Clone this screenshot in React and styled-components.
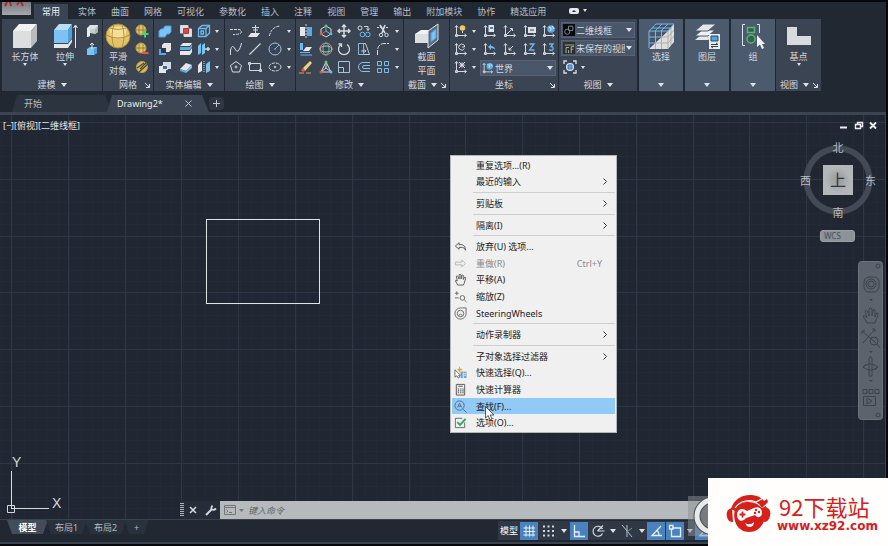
import React from 'react';
import styled, { createGlobalStyle } from 'styled-components';

const color = {
	bar: '#212832',
	panel: '#3b4453',
	light: '#4c5a6e',
	canvas: '#202732',
	text: '#d5d9de',
	active: '#4a82bd',
};

/* ---------- icons ---------- */

const Icon = ({ name, size = 14, box = 14 }) => (
	<svg width={size} height={size} viewBox={`0 0 ${box} ${box}`} fill="none" stroke="#d5d9de" strokeWidth="1" aria-hidden="true">
		{icons[name]}
	</svg>
);

const axes = <path d="M2.5 2v9.5H12M1 3.5L2.5 1.5L4 3.5M10.5 10L12.5 11.5L10.5 13M1.5 10.500h2v2h-2z" />;

const icons = {
	box: <g stroke="none"><path d="M1 8L7 1H25L19 8z" fill="#f1f2f2" /><path d="M1 8H19V25H1z" fill="#dcdedf" /><path d="M19 8L25 1V18L19 25z" fill="#b9bcbe" /></g>,
	extrude: <g stroke="none"><path d="M2 7L7 1H20L16 7z" fill="#b5def8" /><path d="M2 7H16V20H2z" fill="#7cc3f3" /><path d="M16 7L20 1V15L16 20z" fill="#4fa0dc" /><path d="M2 21H16L20 16V19L16 25H2z" fill="#e4e6e8" /><path d="M23.500 3V25M21.500 5L23.500 2L25.500 5" stroke="#e4e6e8" /></g>,
	poly: <g stroke="none"><path d="M2 4L5 1H13V8L10 10V5H5V12L2 13z" fill="#dfe1e4" /><path d="M10 5L13 2V8L10 10z" fill="#aeb3ba" /><path d="M2 4L5 5V12L2 13z" fill="#eceef0" /><path d="M5 5H10V10L5 9z" fill="#c9cdd2" /></g>,
	press: <g stroke="none"><path d="M2 7L5 5H12V11L9 13H2z" fill="#7cc3f3" /><path d="M9 7L12 5V11L9 13z" fill="#4fa0dc" /><path d="M7 7V1M5 3L7 1L9 3" stroke="#e4e6e8" /></g>,
	ball: <g><circle cx="13" cy="13" r="12" fill="#e2c468" stroke="#b18c32" /><path d="M4 5Q13 2 22 5L20 14Q13 17 6 14z" fill="#f4df98" stroke="none" /><path d="M1 12Q13 18 25 12M9 1.500Q5 13 9 24.500M17 1.500Q21 13 17 24.500M4 5Q13 8 22 5" stroke="#a98430" strokeWidth=".8" /></g>,
	ballAdd: <g><circle cx="6" cy="6" r="5" fill="#e2c468" stroke="#c3a048" /><path d="M1 6H11M4 1.500V10.500M8 1.500V10.500" stroke="#876b2a" strokeWidth=".7" /><path d="M10 6.500V13.500M6.500 10H13.500" stroke="#53cf72" strokeWidth="2" /></g>,
	ballSub: <g><circle cx="6" cy="6" r="5" fill="#e2c468" stroke="#c3a048" /><path d="M1 6H11M4 1.500V10.500M8 1.500V10.500" stroke="#876b2a" strokeWidth=".7" /><path d="M7 11H13.500" stroke="#e2574c" strokeWidth="2.200" /></g>,
	ballCut: <g><circle cx="7" cy="7" r="5.500" fill="#d6bb66" stroke="#c3a048" /><path d="M2 8L9 3M4 12L13 4M5 9L12 2" stroke="#4c4633" strokeWidth="1.200" /></g>,
	union: <path d="M1 7L3 5H5L7 2H13V8L11 10H9L7 13H1z" fill="#7cc3f3" stroke="#4fa0dc" />,
	intersect: <g><path d="M1.500 1.500H9V9H1.500z" fill="#dfe1e4" /><path d="M5 5H12.500V12.500H5z" fill="#dfe1e4" /><path d="M4.500 4.500H9.500V9.500H4.500z" fill="#d8474d" stroke="#b8353b" /></g>,
	cube: <path d="M1.500 4.500L5 1.500H12.500V9L9 12.500H1.500zM1.500 4.500H9V12.500M9 4.500L12.500 1.500M4 7H6.500V10H4z" stroke="#6db8ee" strokeWidth="1.300" />,
	subtract: <g stroke="none"><path d="M4 3L6 1H13V8L11 10H4z" fill="#e4e6e8" /><path d="M1 7H8V13H1z" fill="#5aa9e3" /><path d="M3 6H8V11H3z" fill="#2e3948" /></g>,
	stack: <g stroke="none"><path d="M1 4L4 1H13L11 4z" fill="#e4e6e8" /><path d="M1 5H11L13 2V5L11 8H1z" fill="#5aa9e3" /><path d="M1 9H11L13 6V10L11 13H1z" fill="#e4e6e8" /></g>,
	stack2: <g stroke="none"><path d="M1 9L7 3L13 5L7 11z" fill="#e4e6e8" /><path d="M1 9L7 11V13L1 11z" fill="#5aa9e3" /><path d="M7 11L13 5V8L7 13z" fill="#7cc3f3" /></g>,
	slice: <g stroke="none"><path d="M1 4L4 1V11L1 13z" fill="#7cc3f3" /><path d="M5 3L8 1V11L5 13z" fill="#7cc3f3" /><path d="M8 7H13M11 5V9" stroke="#d5d9de" strokeWidth="1.500" /></g>,
	interfere: <g stroke="none"><path d="M1 6H8V13H1z" fill="#e4e6e8" /><path d="M5 2H13V9H5z" fill="#d5d9de" /><path d="M4.500 5.500H9.500V9.500H4.500z" fill="#2d6fb0" stroke="#e4e6e8" /></g>,
	separate: <g stroke="none"><path d="M1 5L5 1V11L1 13z" fill="#e4e6e8" /><path d="M9 4L13 1V11L9 13z" fill="#7cc3f3" /><path d="M7 1V13" stroke="#d5d9de" strokeDasharray="1 1" /></g>,
	pline: <path d="M1 5.500H10Q13 6 12 9Q11 10.500 4 10.500" strokeDasharray="3 1" />,
	plane: <g><path d="M3 9H12L9 13H0z" fill="#e4e6e8" stroke="none" /><path d="M7.500 9V1M4 3.500H11M5 6H10" /></g>,
	arc: <path d="M1.500 12Q3 3 12 2" strokeDasharray="3 1" />,
	spline: <path d="M1.500 13V8Q3 2 5.500 6Q8 12 10.500 7Q12 4 12.500 1" />,
	line: <path d="M1.500 12.500L12.500 1.500" strokeWidth="1.200" />,
	circle: <g><circle cx="7" cy="7" r="6" stroke="#9ec6e6" /><path d="M7 7L11 3M6 7H8" stroke="#6db8ee" /></g>,
	pentagon: <g><path d="M7 1.500L12.500 5.500L10.500 12H3.500L1.500 5.500z" /><circle cx="7" cy="7" r="1" /></g>,
	rect: <path d="M1.500 3.500H12.500V10.500H1.500zM0.500 2.500h2v2h-2zM11.500 9.500h2v2h-2z" />,
	ellipse: <g><ellipse cx="7" cy="7" rx="6" ry="4" strokeDasharray="3 1" /><circle cx="7" cy="7" r=".8" /></g>,
	mirror: <g stroke="none"><path d="M1 3H6V12H1z" fill="#e4e6e8" /><path d="M8 3H13V12H8z" fill="#5aa9e3" /><path d="M7 0V14" stroke="#d5d9de" strokeDasharray="2 1" /></g>,
	gizmo: <g><path d="M7 2L12 5V10L7 13L2 10V5z" /><path d="M7 7V2" stroke="#53cf72" /><path d="M7 7L2.500 10" stroke="#e2574c" /><path d="M7 7L11.500 10" stroke="#6db8ee" /><circle cx="7" cy="1.800" r="1.300" fill="#53cf72" stroke="none" /><circle cx="2" cy="10" r="1.300" fill="#e2574c" stroke="none" /><circle cx="12" cy="10" r="1.300" fill="#6db8ee" stroke="none" /></g>,
	move: <path d="M7 1V13M1 7H13M5 3L7 1L9 3M5 11L7 13L9 11M3 5L1 7L3 9M11 5L13 7L11 9" strokeWidth="1.500" />,
	copy: <g><circle cx="3" cy="4" r="2" /><path d="M7 2.500H11V6M9.500 4.500L11 6.500L12.500 4.500" /><circle cx="5.500" cy="10.500" r="2.300" stroke="#6db8ee" /><circle cx="10.800" cy="10.500" r="2.300" stroke="#6db8ee" /></g>,
	trim: <g><path d="M1 3.500H13" strokeDasharray="2 1" /><path d="M4 1L9 9M9 1L6 9" strokeWidth="1.600" /><circle cx="5" cy="11" r="1.700" /><circle cx="10.500" cy="11" r="1.700" /></g>,
	align: <g><path d="M1 1H4V8H1z" fill="#6db8ee" stroke="none" /><path d="M4 9L7 5H13L10 9z" fill="#e4e6e8" stroke="none" /><path d="M1 10.500H11M1.500 13H13" stroke="#6db8ee" /></g>,
	rotate3d: <g><circle cx="7" cy="7" r="6" stroke="#e2787a" /><ellipse cx="7" cy="7" rx="3" ry="6" stroke="#57c98d" /><ellipse cx="7" cy="7" rx="6" ry="3" stroke="#b1c0ce" /></g>,
	rotate: <path d="M4 2.500A5.500 5.500 0 1 0 10 2.500M4.500 5V2H1.500" strokeWidth="1.300" />,
	stretch: <g><path d="M1.500 1.500H6.500V12.500H1.500z" stroke="#8fb7d6" /><path d="M6.500 1.500H8.500L12.500 12.500H6.500M4 9H9M7.500 7.500L9 9L7.500 10.500" stroke="#b3cde0" /></g>,
	fillet: <path d="M1.500 13V8Q2 2 8 1.500H13" strokeDasharray="5 1" />,
	erase: <g stroke="none"><path d="M4 8L11 1L13 3L6 11z" fill="#f2cf7a" /><path d="M2 10L4 8L6 11L4 12z" fill="#e2574c" /><path d="M0 13H13" stroke="#e8a33d" strokeDasharray="5 2" /></g>,
	scale3d: <g><path d="M7 2L12 12H2zM7 2V8L2 12M7 8L12 12" /><circle cx="7" cy="2" r="1.500" fill="#53cf72" stroke="none" /><circle cx="2" cy="12" r="1.500" fill="#e2574c" stroke="none" /><circle cx="12" cy="12" r="1.500" fill="#6db8ee" stroke="none" /></g>,
	scale: <path d="M1.500 1.500H12.500V12.500H1.500zM1.500 7.500H6.500V12.500" stroke="#a6c6de" />,
	offset: <path d="M13 2.500H6A4.500 4.500 0 0 0 6 11.500H13M13 5.500H7A1.500 1.500 0 0 0 7 8.500H13" stroke="#8fc0e6" />,
	array: <path d="M1.500 1.500h4v4h-4zM8.500 1.500h4v4h-4zM1.500 8.500h4v4h-4zM8.500 8.500h4v4h-4z" stroke="#7fbdec" />,
	section: <g stroke="none"><path d="M1 11L7 7H17L14 11z" fill="#f1f2f2" /><path d="M1 11H14V20H1z" fill="#dcdedf" /><path d="M14 8L24 1V17L14 25z" fill="#5a6b80" stroke="#dfe3e7" /><path d="M17 10L22 6V15L17 19z" fill="#7cc3f3" stroke="#4fa0dc" /></g>,
	ucsBulb: <g>{axes}<circle cx="8.500" cy="4" r="2.800" fill="#f1cb62" stroke="none" /><path d="M8.500 7V9" /></g>,
	ucsRot: <g>{axes}<path d="M10 3A3 3 0 1 0 10.500 6.500M8 5H10.500V3" /></g>,
	ucsObj: <g>{axes}<path d="M5 2L11 8M11 2L5 8" /><circle cx="8" cy="5" r="2" /></g>,
	ucsView: <g>{axes}<path d="M5.500 1h5.500v7h-5.500z" fill="#e1e4e8" stroke="none" /><path d="M7 3h3v2h-3z" fill="#3d87c4" stroke="none" /></g>,
	ucsVec: <g>{axes}<path d="M3 11L9 5M7 4.500H9.500V7" /></g>,
	ucsFace: <g>{axes}<path d="M5 3h8v6h-8z" fill="#dfe3e7" stroke="none" /><path d="M7 5h4v2h-4z" fill="#8b95a2" stroke="none" /></g>,
	ucsWorld: <g>{axes}<circle cx="9" cy="5" r="3.800" fill="#58aeea" stroke="none" /><path d="M6.500 3L9 4L8.500 7M10 2L12 5" stroke="#d9effc" /></g>,
	ucsPrev: <g>{axes}<path d="M5 5L8 2V4Q12 4 12 8Q11 6 8 6V8z" fill="#6db8ee" stroke="none" /></g>,
	ucsOrigin: <g>{axes}<path d="M6 8L10 4M6 8V5.500M6 8H8.500" /></g>,
	ucsZ: <g>{axes}<path d="M6.500 2H11L6.500 8H11.500" stroke="#6db8ee" strokeWidth="1.300" /></g>,
	ucs3: <g>{axes}<path d="M7 2H11L9 4.500Q12 5 11 7.500Q9 9 7 7.500" stroke="#6db8ee" strokeWidth="1.300" /></g>,
	viewCube: <g><path d="M1 4V1H4M10 1H13V4M13 10V13H10M4 13H1V10" strokeWidth="1.400" /><circle cx="7" cy="7" r="4" fill="#dfe6ec" stroke="none" /><path d="M5 5H9V9H5z" fill="#58aeea" stroke="#2f77b3" /></g>,
	wire: <g><rect width="14" height="14" fill="#080a0d" stroke="none" /><circle cx="5" cy="9" r="3" stroke="#8f989f" /><path d="M6.500 2.500h5v5h-5z" stroke="#8f989f" /></g>,
	saved: <g><rect width="14" height="14" fill="#2a2f2e" stroke="none" /><path d="M2 3.500H13M3.500 13V6.500H7M6.500 13V9.500M9.500 13V5.500H13M9.500 8.500H12" stroke="#bfc3b5" /></g>,
	select: <g stroke="none"><path d="M1 8L8 1H26L20 8z" fill="#3f4f63" /><path d="M1 8L20 8L1 26z" fill="#47566a" /><path d="M20 8L26 1V19L20 26H1z" fill="#dcdedf" /><path d="M1 8H20M1 14H14M1 20H7M7.500 8V20M13.500 8V14M1 8V25M1 8L8 1H26L20 8M7 8L14 1M13 8L20 1M4 5H23" stroke="#79b9e8" /><path d="M20 8V26M13.500 14V26M7.500 20V26M14 14H20L26 7M7 20H20L26 13M23 5V22" stroke="#a9a49b" strokeWidth=".8" /></g>,
	layers: <g stroke="none"><path d="M1 17L7 12H21L14 17z" fill="#e4e6e8" /><path d="M1 13L8 7H21L14 13z" fill="#f0f1f2" stroke="#4c5a6e" /><path d="M1 8L9 1H22L14 8z" fill="#e4e6e8" stroke="#4c5a6e" /><path d="M15 11H26V26H15z" fill="#e9ebed" /><path d="M17 13H24V18H17z" fill="#4da5e6" stroke="#33445a" /><path d="M17 21.500H24L22 20M24 23.500H17L19 25" stroke="#33445a" /></g>,
	group: <g><path d="M5 1.500H2.500V22.500H5M17 1.500H19.500V10" stroke="#dfe3e7" /><path d="M7.500 4.500H14.500V9.500H7.500z" stroke="#58b277" fill="#35604f" strokeWidth="1.500" /><circle cx="11" cy="16" r="4" stroke="#58b277" fill="#35604f" strokeWidth="1.500" /><path d="M17 12V24L20 21.500L22 26L24 25L22 21H25z" fill="#f2f3f4" stroke="none" /></g>,
	base: <path d="M1 4H11V13H25V22H1z" fill="#d9dbde" stroke="none" />,
	undo: <path d="M1.500 6.500L5.500 3V5H9Q12.500 6 12.500 11Q11 8 9 8H5.500V10z" stroke="#555" />,
	redo: <path d="M12.500 7L8.500 3.500V5.500H1.500V8.500H8.500V10.500z" stroke="#b4b4b4" />,
	pan: <path d="M4 13L1.500 8.500Q1.500 7 3.500 8.500L2.500 3.500Q3.500 2.500 4.500 4L5.500 6.500V2Q6.500 .5 7.500 2V6.500L8.500 2.500Q10 1.500 10 3V7L11.500 4.500Q13 4 12.500 6L11 11L10 13z" stroke="#555" />,
	zoom: <g stroke="#666"><path d="M1 3.500H5M3 1.500V5.500M1 8.500H5" /><circle cx="9" cy="8.500" r="2.500" /><path d="M11 10.500L13.500 13" /></g>,
	wheel: <g stroke="#666"><path d="M13 1V7A6 6 0 1 1 7 1z" /><circle cx="7" cy="7" r="3.500" /><path d="M5 9Q7 6.500 9 9" /></g>,
	quick: <g stroke="none"><path d="M1 4V12L3 10.500L4.500 13L6 12L5 10H7z" fill="#fff" stroke="#444" strokeWidth=".8" /><path d="M6 0L7 3L9.500 3.500L7 5L6 7L5 5L3 3.500L5 3z" fill="#eba533" /><path d="M7 6H13.500V13H7z" fill="#7ba4c4" /><path d="M10 7V13M11 8H13M11 10H13" stroke="#e5eef4" /></g>,
	calc: <g stroke="#555"><path d="M2.500 1.500H11.500V13H2.500zM4.500 3.500H9.500" /><path d="M4 6.500H10.500M4 8.500H10.500M4 10.500H10.500" strokeDasharray="1.500 1" strokeWidth="1.200" /></g>,
	find: <g stroke="#4f6c86"><circle cx="6" cy="6" r="5" /><path d="M10 10L13.500 13.500M3.800 8L6 3.500L8.200 8M4.500 6.700H7.500" /></g>,
	check: <g><path d="M11.500 7V12.500H1.500V2.500H9" stroke="#666" /><path d="M3.500 6.500L6.500 9.500L12.500 3" stroke="#2aa95a" strokeWidth="2" /></g>,
	prompt: <g stroke="#73777b"><path d="M1.500 2.500H12.500V11.500H1.500zM1.500 4.500H12.500M3.500 6.500L5 8L3.500 9.500M6 9.500H9" /></g>,
	gridOn: <path d="M4 1.500V12.500M7.500 1.500V12.500M11 1.500V12.500M1.500 4H13M1.500 7.500H13M1.500 11H13" stroke="#e6eef6" />,
	snap: <path d="M2 2.500H14M2 7H14M2 11.500H14" strokeDasharray="2 2.500" strokeWidth="1.800" />,
	ortho: <path d="M2.500 1V12.500H13M2.500 8H7V12.500" stroke="#e6eef6" strokeWidth="1.300" />,
	polar: <g><path d="M11.500 5A5 5 0 1 0 11.500 9.500M6.500 7H13.500M6.500 7L12 1.500" strokeWidth="1.200" /></g>,
	iso: <g><path d="M2 1L12 13M7 1V13" stroke="#b8c0c8" /><path d="M7 8L12 4" stroke="#58b277" /></g>,
	track: <path d="M12 2L3 11.500H13M8 6.500Q10 8 10 11" stroke="#e6eef6" strokeWidth="1.300" />,
	osnap: <path d="M4 4H12.500V12.500H3.500V4.500M1.500 1.500H5V5H1.500z" stroke="#e6eef6" strokeWidth="1.300" />,
};

const Caret = () => (
	<svg width="6" height="4" viewBox="0 0 6 4" aria-hidden="true"><path d="M0 0H6L3 4z" fill="#dfe2e6" /></svg>
);

const TinyCaret = () => (
	<svg width="4" height="3" viewBox="0 0 4 3" aria-hidden="true"><path d="M0 0H4L2 3z" fill="#dfe2e6" /></svg>
);

/* ---------- data ---------- */

const ribbonTabs = ['常用', '实体', '曲面', '网格', '可视化', '参数化', '插入', '注释', '视图', '管理', '输出', '附加模块', '协作', '精选应用'];

const menuItems = [
	{ label: '重复选项...(R)' },
	{ label: '最近的输入', more: true },
	null,
	{ label: '剪贴板', more: true },
	null,
	{ label: '隔离(I)', more: true },
	null,
	{ label: '放弃(U) 选项...', icon: 'undo' },
	{ label: '重做(R)', icon: 'redo', keys: 'Ctrl+Y', off: true },
	{ label: '平移(A)', icon: 'pan' },
	{ label: '缩放(Z)', icon: 'zoom' },
	{ label: 'SteeringWheels', icon: 'wheel' },
	null,
	{ label: '动作录制器', more: true },
	null,
	{ label: '子对象选择过滤器', more: true },
	{ label: '快速选择(Q)...', icon: 'quick' },
	{ label: '快速计算器', icon: 'calc' },
	{ label: '查找(F)...', icon: 'find', hot: true },
	{ label: '选项(O)...', icon: 'check' },
];

// a "v" cell is the drop-down arrow that ends a row
const IconRows = ({ cols, items }) => (
	<IconGrid $cols={cols}>
		{items.map((name, i) => (
			<Tool key={i} type="button" aria-label={name}>
				{name === 'v' ? <TinyCaret /> : <Icon name={name} />}
			</Tool>
		))}
	</IconGrid>
);

const Big = ({ icon, lines, width, caret }) => (
	<BigButton type="button" $width={width}>
		<Icon name={icon} size={26} box={26} />
		{lines.map((line) => <span key={line}>{line}</span>)}
		{caret && <TinyCaret />}
	</BigButton>
);

const PanelTitle = ({ label, caret, launcher }) => (
	<Title $shift={caret && launcher}>
		<span>{label}</span>
		{caret && <Caret />}
		{launcher && (
			<Launcher type="button" aria-label="launcher">
				<svg width="5" height="5" viewBox="0 0 5 5"><path d="M0 0L4 4M4.500 1V4.500H1" stroke="#dfe2e6" fill="none" /></svg>
			</Launcher>
		)}
	</Title>
);

const Combo = ({ icon, label }) => (
	<ComboBox>
		<Icon name={icon} size={12} />
		<ComboSelect aria-label={label}><option>{label}</option></ComboSelect>
		<Caret />
	</ComboBox>
);

const Ribbon = () => (
	<RibbonBar>
		<Panel $width={100}>
			<Tools>
				<Big icon="box" lines={['长方体']} width={46} caret />
				<Big icon="extrude" lines={['拉伸']} width={34} caret />
				<IconRows cols="20px" items={['poly', 'press']} />
			</Tools>
			<PanelTitle label="建模" caret />
		</Panel>
		<Panel $width={50}>
			<Tools>
				<Big icon="ball" lines={['平滑', '对象']} width={30} />
				<IconRows cols="18px" items={['ballAdd', 'ballSub', 'ballCut']} />
			</Tools>
			<PanelTitle label="网格" launcher />
		</Panel>
		<Panel $width={70}>
			<Tools>
				<IconRows cols="22px 20px 16px 10px" items={['union', 'intersect', 'cube', 'v', 'subtract', 'stack', 'slice', 'v', 'interfere', 'stack2', 'separate', 'v']} />
			</Tools>
			<PanelTitle label="实体编辑" caret />
		</Panel>
		<Panel $width={70}>
			<Tools>
				<IconRows cols="22px 16px 24px 4px" items={['pline', 'plane', 'arc', 'v', 'spline', 'line', 'circle', 'v', 'pentagon', 'rect', 'ellipse', 'v']} />
			</Tools>
			<PanelTitle label="绘图" caret />
		</Panel>
		<Panel $width={107}>
			<Tools>
				<IconRows
					cols="20px 20px 16px 24px 14px 14px"
					items={['mirror', 'gizmo', 'move', 'copy', 'trim', 'v', 'align', 'rotate3d', 'rotate', 'stretch', 'fillet', 'v', 'erase', 'scale3d', 'scale', 'offset', 'array', 'v']}
				/>
			</Tools>
			<PanelTitle label="修改" caret />
		</Panel>
		<Panel $width={45}>
			<Tools>
				<Big icon="section" lines={['截面', '平面']} width={46} />
			</Tools>
			<PanelTitle label="截面" caret launcher />
		</Panel>
		<Panel $width={108}>
			<Tools>
				<IconRows cols="22px 4px" items={['ucsBulb', 'v', 'ucsRot', 'v', 'ucsObj', 'v']} />
				<Stack $indent>
					<IconRows
						cols="20px 20px 20px 18px"
						items={['ucsView', 'ucsVec', 'ucsFace', 'ucsWorld', 'ucsPrev', 'ucsOrigin', 'ucsZ', 'ucs3']}
					/>
					<Combo icon="ucsWorld" label="世界" />
				</Stack>
			</Tools>
			<PanelTitle label="坐标" launcher />
		</Panel>
		<Panel $width={78}>
			<Tools>
				<Stack>
					<Combo icon="wire" label="二维线框" />
					<Combo icon="saved" label="未保存的视图" />
					<IconRows cols="18px 8px" items={['viewCube', 'v']} />
				</Stack>
			</Tools>
			<PanelTitle label="视图" caret />
		</Panel>
		{[['select', '选择'], ['layers', '图层'], ['group', '组']].map(([icon, label]) => (
			<Panel key={icon} $width={44} $light>
				<Tools>
					<Big icon={icon} lines={[label]} width={44} />
				</Tools>
				<Title><Caret /></Title>
			</Panel>
		))}
		<Panel $width={45}>
			<Tools>
				<Big icon="base" lines={['基点']} width={45} caret />
			</Tools>
			<PanelTitle label="视图" caret launcher />
		</Panel>
	</RibbonBar>
);

const every = (from, step, count) => Array.from({ length: count }, (_, i) => Math.round(from + i * step) + 0.5);
const gridPath = (xs, ys) => xs.map((x) => `M${x} 0V2000`).join('') + ys.map((y) => `M0 ${y}H3000`).join('');
const minorGrid = gridPath(every(1, 11.36, 250), every(7, 11.36, 150));
const majorGrid = gridPath(every(11, 56.8, 50), every(7, 56.8, 30));

const Drawing = () => (
	<Sheet aria-hidden="true">
		<path d={minorGrid} stroke="#222a35" fill="none" />
		<path d={majorGrid} stroke="#2e3744" fill="none" />
		<rect x="206.500" y="104.500" width="113" height="84" fill="none" stroke="#dfe2e5" />
	</Sheet>
);

const Ucs = () => (
	<UcsMark width="64" height="66" viewBox="0 -6 64 66" fill="none" stroke="#d5d8dc" aria-hidden="true">
		<path d="M7.500 48.500h7v7h-7zM11.500 14V52M11 51.500H49" />
		<text x="12" y="10" fill="#d5d8dc" stroke="none">Y</text>
		<text x="52" y="51" fill="#d5d8dc" stroke="none">X</text>
	</UcsMark>
);

const ViewCube = () => (
	<Cube>
		<span>北</span>
		<CubeRow>
			<span>西</span>
			<CubeFace type="button">上</CubeFace>
			<span>东</span>
		</CubeRow>
		<span>南</span>
	</Cube>
);

const Menu = () => (
	<MenuBox>
		{menuItems.map((item, i) => item ? (
			<MenuItem key={i} type="button" disabled={item.off} $hot={item.hot}>
				<MenuIcon>{item.icon && <Icon name={item.icon} size={13} />}</MenuIcon>
				<MenuLabel>{item.label}</MenuLabel>
				{item.keys && <Keys>{item.keys}</Keys>}
				{item.more && <svg width="4" height="7" viewBox="0 0 4 7"><path d="M.5 .5L3.500 3.500L.5 6.500" stroke="#333" fill="none" /></svg>}
			</MenuItem>
		) : <Divider key={i} />)}
	</MenuBox>
);

const NavTools = () => (
	<NavBar width="25" height="159" viewBox="0 0 25 159" fill="none" stroke="#3b424c" aria-hidden="true">
		<rect x=".5" y=".5" width="24" height="158" rx="3" fill="#5d636c" stroke="#6d737b" />
		<circle cx="20" cy="5" r="2" />
		<rect x="6" y="16" width="15" height="15" rx="5" />
		<circle cx="13" cy="23" r="5" />
		<circle cx="13" cy="23" r="3" />
		<path d="M9 62L5 55Q6 53 9 57L7 50Q8 48 10 51L11 55V48Q12.500 46 14 48V55L15 49Q17 48 17 50V56L18.500 52Q20.500 51 20 54L17 62z" />
		<path d="M4 70L18 82M17 68L5 82M4 70H7M4 70V73M17 68H14M17 68V71" />
		<circle cx="16" cy="80" r="4" />
		<path d="M19 83L22 87M5 106Q12 100 20 106Q12 112 5 106M11 98V115H14V98L12.500 95zM5 106L8 103M20 106L17 109" />
		<path d="M5 128.500h4v4h-4zM11 128.500h4v4h-4zM17 128.500h4v4h-4zM5.500 135.500h12v9h-12zM9 137V143L14 140z" />
		<circle cx="20" cy="154" r="2" />
		<path d="M11 38H15L13 40zM11 90H15L13 92zM11 119H15L13 121z" fill="#3b424c" stroke="none" />
	</NavBar>
);

const CommandLine = () => (
	<Command>
		<Grip />
		<Plain type="button" aria-label="close">
			<svg width="8" height="8" viewBox="0 0 8 8"><path d="M1 1L7 7M7 1L1 7" stroke="#d5d9de" strokeWidth="1.500" /></svg>
		</Plain>
		<Plain type="button" aria-label="customize">
			<svg width="12" height="12" viewBox="0 0 12 12"><path d="M1 11L7 5" stroke="#d5d9de" strokeWidth="2" /><path d="M7.500 1.500Q5.500 4 7 5.500Q9 6.500 11 4.500" stroke="#d5d9de" strokeWidth="1.800" fill="none" /></svg>
		</Plain>
		<CommandField>
			<Icon name="prompt" size={14} />
			<svg width="5" height="3" viewBox="0 0 5 3"><path d="M0 0H5L2.500 3z" fill="#73777b" /></svg>
			<input aria-label="键入命令" placeholder="键入命令" />
		</CommandField>
	</Command>
);

const Status = () => (
	<StatusBar>
		<StatusText type="button">模型</StatusText>
		<StatusButton type="button" aria-label="grid" $on><Icon name="gridOn" /></StatusButton>
		<StatusButton type="button" aria-label="snap"><Icon name="snap" /></StatusButton>
		<StatusDrop><Caret /></StatusDrop>
		<StatusButton type="button" aria-label="ortho" $on><Icon name="ortho" /></StatusButton>
		<StatusButton type="button" aria-label="polar"><Icon name="polar" /></StatusButton>
		<StatusDrop $narrow><Caret /></StatusDrop>
		<StatusButton type="button" aria-label="isometric"><Icon name="iso" /></StatusButton>
		<StatusDrop $narrow><Caret /></StatusDrop>
		<StatusButton type="button" aria-label="tracking" $on><Icon name="track" /></StatusButton>
		<StatusButton type="button" aria-label="osnap" $on><Icon name="osnap" /></StatusButton>
		<StatusDrop $narrow><Caret /></StatusDrop>
		<StatusButton type="button" aria-label="annotation" $on><Icon name="track" /></StatusButton>
	</StatusBar>
);

const Brand = () => (
	<BrandBox>
		<svg width="46" height="40" viewBox="0 0 46 40" aria-hidden="true">
			<path d="M5 15C8 5 16 1 24 1C30 1 35 3 38 7L41 5L42 8L36 14L33 10C24 4 13 8 9 17z" fill="#d8201b" />
			<path d="M6 14C1 15 0 19 1 23C2 27 4 28 7 28z" fill="#d8201b" />
			<path d="M39 13C44 14 45 18 44 22C43 26 41 28 38 28z" fill="#d8201b" />
			<path d="M9 15C13 8 23 6 31 10L36 14L40 12C41 25 36 38 23 38C12 38 6 27 9 15z" fill="#d8201b" />
			<path d="M11 20C12 14 17 14 21 17L28 14C32 12 36 14 36 19C36 23 32 25 29 21L20 24C16 29 11 27 11 20z" fill="#fff" />
			<path d="M13.500 20.500H19.500M16.500 17.500V23.500" stroke="#d8201b" strokeWidth="1.800" />
			<circle cx="30" cy="16" r="1.200" fill="#d8201b" /><circle cx="33" cy="18" r="1.200" fill="#d8201b" /><circle cx="29" cy="19" r="1.200" fill="#d8201b" />
			<path d="M19 29Q24 32 28 28Q28 33 23 33Q20 32 19 29z" fill="#fff" />
			<path d="M9 14C14 7 22 5 30 8L39 3" stroke="#fff" strokeWidth="1.200" fill="none" />
		</svg>
		<BrandText>
			<strong>92下载站</strong>
			<em>www.xz92.com</em>
		</BrandText>
	</BrandBox>
);

const App = () => {
	return (
		<Frame>
			<GlobalStyle />
			<TabBar>
				<AppButton type="button" aria-label="A">
					<svg width="29" height="13" viewBox="0 0 29 13"><path d="M3 4L5 0M8 0L9 4M15 3L17 0M19 0L21 4" stroke="#b3262b" strokeWidth="2" /></svg>
				</AppButton>
				{ribbonTabs.map((tab, i) => <RibbonTab key={tab} type="button" $active={i === 0}>{tab}</RibbonTab>)}
				<TabExtra type="button" aria-label="ribbon">
					<svg width="10" height="6" viewBox="0 0 10 6"><rect width="10" height="6" rx="2" fill="#e6e8eb" /><path d="M3 4L5 2L7 4z" fill="#212832" /></svg>
					<TinyCaret />
				</TabExtra>
			</TabBar>
			<Ribbon />
			<FileTabs>
				<FileTab type="button" $width={100}>开始</FileTab>
				<FileTab type="button" $width={102} $active>
					<span>Drawing2*</span>
					<svg width="7" height="7" viewBox="0 0 7 7"><path d="M.5 .5L6.500 6.500M6.500 .5L.5 6.500" stroke="#c3c8ce" /></svg>
				</FileTab>
				<AddTab type="button" aria-label="new">
					<svg width="7" height="7" viewBox="0 0 7 7"><path d="M3.500 0V7M0 3.500H7" stroke="#c3c8ce" /></svg>
				</AddTab>
			</FileTabs>
			<Workspace>
				<Drawing />
				<ViewHeader>
					<span>[−][俯视][二维线框]</span>
					<svg width="38" height="9" viewBox="0 0 38 9" fill="none" stroke="#eceef0">
						<path d="M1 6.500H8" strokeWidth="2" />
						<path d="M16.500 3.500H21.500V7.500H16.500zM18.500 3V1.500H23.500V5.500H22" strokeWidth="1.400" />
						<path d="M31 1.500L37 7.500M37 1.500L31 7.500" strokeWidth="1.800" />
					</svg>
				</ViewHeader>
				<Ucs />
				<ViewCube />
				<Wcs type="button">WCS</Wcs>
				<NavTools />
				<CommandLine />
				<Menu />
				<Pointer width="10" height="15" viewBox="0 0 10 15" aria-hidden="true">
					<path d="M.5 .5V12L3.200 9.500L5 14L7 13L5.200 9H9z" fill="#fff" stroke="#333" strokeWidth=".8" />
				</Pointer>
			</Workspace>
			<Footer>
				<LayoutTab type="button" $active>模型</LayoutTab>
				<LayoutTab type="button">布局1</LayoutTab>
				<LayoutTab type="button">布局2</LayoutTab>
				<LayoutTab type="button" $small>+</LayoutTab>
				<Status />
			</Footer>
			<Stamp width="40" height="40" viewBox="0 0 40 40" aria-hidden="true">
				<rect width="40" height="40" fill="#8c9094" opacity=".5" />
				<circle cx="25" cy="20" r="16" fill="#777b80" stroke="#4c5056" strokeWidth="7" />
				<circle cx="25" cy="20" r="16" stroke="#e8e9ea" strokeWidth="5" fill="none" />
			</Stamp>
			<Brand />
		</Frame>
	);
};

const GlobalStyle = createGlobalStyle`
	* {
		box-sizing: border-box;
	}
	body {
		margin: 0;
		background: #05070a;
		color: ${color.text};
		font-family: "Noto Sans", "Noto Sans CJK SC", sans-serif;
		font-size: 9px;
		line-height: 13px;
	}
	button, input, select {
		margin: 0;
		padding: 0;
		border: 0;
		background: none;
		color: inherit;
		font: inherit;
	}
	svg {
		flex: none;
	}
`;

const Frame = styled.div`
	display: flex;
	flex-direction: column;
	min-height: 100vh;
	overflow: hidden;
	background: ${color.bar};
	border: solid #05070a;
	border-width: 2px 2px 2px 0;
`;

const TabBar = styled.nav`
	display: flex;
	align-items: center;
	gap: 1px;
	height: 17px;
	padding-left: 2px;
`;

const AppButton = styled.button`
	display: flex;
	align-self: flex-start;
	width: 29px;
	height: 13px;
	margin-right: 2px;
	background: linear-gradient(#777b80, #a6a8ab);
`;

const RibbonTab = styled.button`
	height: 15px;
	align-self: flex-end;
	padding: 0 ${({ $active }) => $active ? 8 : 7}px;
	margin-right: ${({ $active }) => $active ? 2 : 0}px;
	background: ${({ $active }) => $active ? color.panel : 'none'};
	color: ${({ $active }) => $active ? '#f2f4f6' : '#b9bfc7'};
	white-space: nowrap;
`;

const TabExtra = styled.button`
	display: flex;
	align-items: center;
	gap: 4px;
	margin-left: 15px;
`;

const RibbonBar = styled.header`
	display: flex;
	gap: 1px;
	height: 72px;
	padding-left: 2px;
`;

const Panel = styled.section`
	display: flex;
	flex-direction: column;
	justify-content: space-between;
	flex: 0 0 ${({ $width }) => $width}px;
	min-width: 0;
	margin-left: ${({ $light }) => $light ? 1 : 0}px;
	background: ${({ $light }) => $light ? color.light : color.panel};
`;

const Tools = styled.div`
	display: flex;
	padding-top: 3px;
`;

const Stack = styled.div`
	display: flex;
	flex-direction: column;
	flex: 1;
	min-width: 0;
	padding: 0 2px 0 ${({ $indent }) => $indent ? 4 : 2}px;
	gap: 2px;
`;

const IconGrid = styled.div`
	display: grid;
	grid-template-columns: ${({ $cols }) => $cols};
	grid-auto-rows: 18px;
	align-content: start;
`;

const Tool = styled.button`
	display: flex;
	align-items: center;
	justify-content: center;
`;

const BigButton = styled.button`
	display: flex;
	flex-direction: column;
	align-items: center;
	width: ${({ $width }) => $width}px;
	padding-top: 1px;
	white-space: nowrap;

	span {
		margin-top: 1px;
		line-height: 13px;
	}
`;

const Title = styled.div`
	position: relative;
	display: flex;
	align-items: center;
	justify-content: center;
	gap: 5px;
	height: 13px;
	padding-right: ${({ $shift }) => $shift ? 8 : 0}px;
`;

const Launcher = styled.button`
	position: absolute;
	right: 3px;
	bottom: 3px;
	display: flex;
`;

const ComboBox = styled.label`
	display: flex;
	align-items: center;
	gap: 1px;
	height: 16px;
	padding: 0 2px 0 1px;
	background: #4a576a;
	border: 1px solid #566376;
`;

const ComboSelect = styled.select`
	flex: 1;
	min-width: 0;
	appearance: none;
	outline: none;
	overflow: hidden;
`;

const FileTabs = styled.div`
	display: flex;
	align-items: flex-end;
	height: 24px;
	padding-left: 12px;
	border-bottom: 3px solid ${color.panel};
`;

const FileTab = styled.button`
	display: flex;
	align-items: center;
	justify-content: space-between;
	width: ${({ $width }) => $width}px;
	height: 17px;
	margin-right: -5px;
	padding: 0 17px 0 ${({ $active }) => $active ? 10 : 12}px;
	clip-path: polygon(5px 0, calc(100% - 7px) 0, 100% 100%, 0 100%);
	background: ${({ $active }) => $active ? color.panel : '#2c3440'};
	color: ${({ $active }) => $active ? '#e8ebee' : '#b4bac2'};
`;

const AddTab = styled.button`
	display: flex;
	align-items: center;
	justify-content: center;
	width: 15px;
	height: 13px;
	margin: 0 0 2px 5px;
	border-radius: 4px;
	background: #2f3744;
`;

const Workspace = styled.main`
	position: relative;
	flex: 1;
	min-height: 400px;
	background: ${color.canvas};
	border: solid #39424f;
	border-width: 0 1px 1px 0;
`;

const Sheet = styled.svg`
	position: absolute;
	width: 100%;
	height: 100%;
	shape-rendering: crispEdges;
`;

const ViewHeader = styled.div`
	position: relative;
	display: flex;
	align-items: center;
	justify-content: space-between;
	height: 20px;
	padding: 0 8px 0 3px;
	color: #e3e6e9;
`;

const UcsMark = styled.svg`
	position: absolute;
	left: 0;
	bottom: 2px;
	font: 14px "Liberation Sans", sans-serif;
`;

const Cube = styled.div`
	position: absolute;
	top: 26px;
	right: 9px;
	display: flex;
	flex-direction: column;
	align-items: center;
	justify-content: space-between;
	width: 76px;
	height: 78px;
	color: #b9bdc2;
	font-size: 11px;
	background: radial-gradient(circle, transparent 28px, #434a55 29px, #434a55 34px, transparent 35px);
`;

const CubeRow = styled.div`
	display: flex;
	align-items: center;
	justify-content: space-between;
	width: 100%;
`;

const CubeFace = styled.button`
	width: 30px;
	height: 30px;
	background: radial-gradient(#96999d, #b4b6b9 60%);
	color: #33373d;
	font-size: 16px;
	line-height: 28px;
`;

const Wcs = styled.button`
	position: absolute;
	top: 115px;
	right: 30px;
	width: 35px;
	height: 12px;
	padding-left: 3px;
	border: 1px solid #9da1a6;
	border-radius: 3px;
	background: #8d9298;
	color: #4b5057;
	font-size: 8px;
	line-height: 10px;
	text-align: left;
`;

const NavBar = styled.svg`
	position: absolute;
	top: 146px;
	right: 2px;
`;

const Command = styled.div`
	position: absolute;
	left: 180px;
	right: 150px;
	bottom: 0;
	display: flex;
	align-items: stretch;
	height: 18px;
	background: #262d38;
`;

const Grip = styled.div`
	width: 4px;
	margin: 2px 0;
	background: repeating-linear-gradient(#aeb3b9 0 1px, transparent 1px 2px);
`;

const Plain = styled.button`
	display: flex;
	align-items: center;
	justify-content: center;
	width: 18px;
`;

const CommandField = styled.label`
	display: flex;
	align-items: center;
	gap: 2px;
	flex: 1;
	padding-left: 3px;
	background: #b7babc;

	input {
		flex: 1;
		padding-left: 2px;
		outline: none;
	}
	input::placeholder {
		color: #63676b;
		font-style: italic;
		opacity: 1;
	}
`;

const MenuBox = styled.div`
	position: absolute;
	left: 450px;
	top: 40px;
	display: flex;
	flex-direction: column;
	width: 167px;
	height: 278px;
	padding: 1px;
	border: 1px solid #b4b6b8;
	background: #f0f0f0;
	color: #222;
`;

const MenuItem = styled.button`
	display: flex;
	align-items: center;
	flex: 1;
	padding-right: 8px;
	background: ${({ $hot }) => $hot ? '#91c9f7' : 'none'};
	color: ${({ disabled }) => disabled ? '#8a8a8a' : '#222'};
	text-align: left;
`;

const MenuIcon = styled.span`
	display: flex;
	width: 24px;
	padding-left: 2px;
`;

const MenuLabel = styled.span`
	flex: 1;
`;

const Keys = styled.span`
	padding-right: 5px;
`;

const Divider = styled.div`
	height: 1px;
	margin: 2px 0 2px 21px;
	background: #cfcfcf;
`;

const Pointer = styled.svg`
	position: absolute;
	left: 485px;
	top: 291px;
`;

const Footer = styled.footer`
	display: flex;
	align-items: flex-start;
	height: 24px;
	padding-left: 7px;
	border-bottom: 2px solid #39424f;
`;

const LayoutTab = styled.button`
	width: ${({ $small }) => $small ? 25 : 41}px;
	height: 14px;
	margin-right: ${({ $small }) => $small ? 0 : -2}px;
	clip-path: polygon(0 0, 100% 0, calc(100% - 5px) 100%, 5px 100%);
	background: ${({ $active }) => $active ? '#424c5b' : '#29313c'};
	color: ${({ $active }) => $active ? '#fff' : '#b4bac2'};
	font-weight: ${({ $active }) => $active ? 700 : 400};
`;

const StatusBar = styled.div`
	display: flex;
	align-items: center;
	width: 388px;
	height: 19px;
	margin: 1px 0 0 auto;
	background: #303846;
`;

const StatusText = styled.button`
	width: 22px;
	color: #fff;
`;

const StatusButton = styled.button`
	display: flex;
	align-items: center;
	justify-content: center;
	width: 18px;
	height: 18px;
	margin-right: 1px;
	background: ${({ $on }) => $on ? color.active : 'none'};
`;

const StatusDrop = styled.span`
	display: flex;
	justify-content: center;
	width: ${({ $narrow }) => $narrow ? 10 : 12}px;
`;

const Stamp = styled.svg`
	position: fixed;
	right: 160px;
	bottom: 10px;
`;

const BrandBox = styled.aside`
	position: fixed;
	right: 0;
	bottom: 0;
	display: flex;
	align-items: center;
	gap: 5px;
	width: 180px;
	height: 68px;
	padding: 4px 0 0 18px;
	background: #fffefd;
`;

const BrandText = styled.div`
	display: flex;
	flex-direction: column;
	color: #d8201b;
	white-space: nowrap;

	strong {
		padding-left: 2px;
		font: 400 22px/24px "Noto Sans CJK SC", sans-serif;
	}
	em {
		font: 700 12px/16px "DejaVu Sans", sans-serif;
	}
`;

export default App;
